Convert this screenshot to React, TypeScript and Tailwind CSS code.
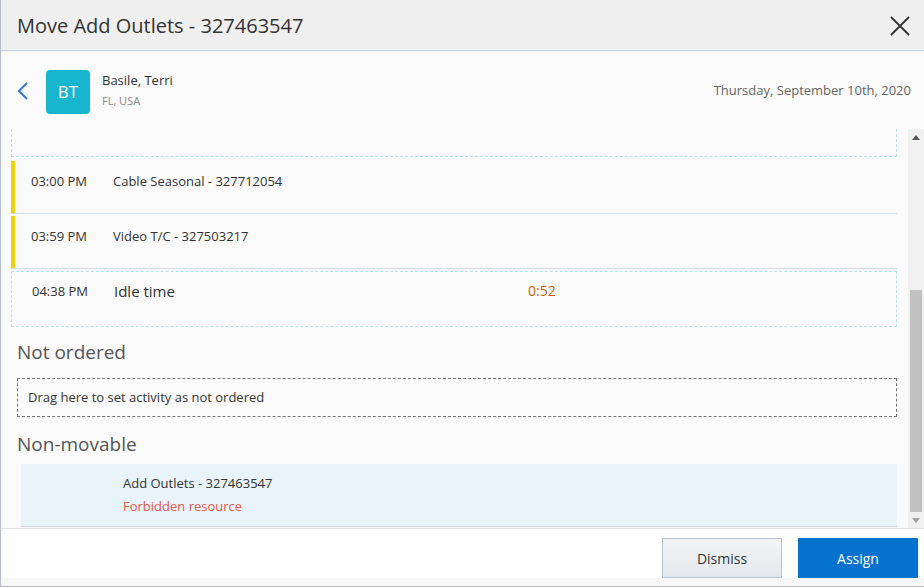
import React from "react";

export default function App() {
  const font = { fontFamily: '"Open Sans", "Noto Sans", sans-serif' };
  return (
    <div
      className="w-[924px] h-[587px] flex flex-col border-l border-b border-[#b4bccc] bg-[#fafafa] overflow-hidden text-[#333]"
      style={font}
    >
      {/* Header */}
      <div className="h-[51px] shrink-0 bg-[#efefef] border-b border-[#c4d0dc] flex items-center justify-between pl-[16px] pr-[14px]">
        <div className="text-[20px] text-[#333] mt-[1px]">Move Add Outlets - 327463547</div>
        <svg width="20" height="20" viewBox="0 0 20 20" className="mt-[1px]">
          <path d="M1 1 L19 19 M19 1 L1 19" stroke="#333" strokeWidth="1.8" fill="none" />
        </svg>
      </div>

      {/* Sub header */}
      <div className="h-[78px] shrink-0 flex items-center pl-[16px] pr-[13px] pt-[3px]">
        <svg width="12" height="18" viewBox="0 0 12 18" className="-mt-[1px]">
          <path d="M10 1 L2 9 L10 17" stroke="#3a78d0" strokeWidth="2" fill="none" />
        </svg>
        <div className="ml-[17px] w-[44px] h-[44px] rounded-[4px] bg-[#17b6cf] flex items-center justify-center text-white text-[17px]">
          BT
        </div>
        <div className="ml-[12px] flex flex-col -mt-[3px]">
          <div className="text-[13px] text-[#333] leading-[18px]">Basile, Terri</div>
          <div className="text-[11px] text-[#888] leading-[16px] mt-[4px]">FL, USA</div>
        </div>
        <div className="ml-auto text-[13px] text-[#666] -mt-[2px]">Thursday, September 10th, 2020</div>
      </div>

      {/* Body */}
      <div className="h-[399px] shrink-0 flex">
        <div className="flex-1 pl-[10px] pr-[11px] overflow-hidden">
          <div className="h-[28px] border-x border-b border-dashed border-[#b8e2f4]" />

          <div className="mt-[4px] h-[53px] flex items-start border-b border-[#d0dce8]">
            <div className="w-[4px] self-stretch bg-[#f5d000]" />
            <div className="w-[98px] pl-[16px] pt-[11px] text-[13px] leading-[18px]">03:00 PM</div>
            <div className="text-[13px] pt-[11px] leading-[18px]">Cable Seasonal - 327712054</div>
          </div>
          <div className="mt-[2px] h-[53px] flex items-start border-b border-[#d0dce8]">
            <div className="w-[4px] self-stretch bg-[#f5d000]" />
            <div className="w-[98px] pl-[16px] pt-[11px] text-[13px] leading-[18px]">03:59 PM</div>
            <div className="text-[13px] pt-[11px] leading-[18px]">Video T/C - 327503217</div>
          </div>

          <div className="mt-[2px] h-[56px] flex items-start pt-[9px] border border-dashed border-[#b8e2f4]">
            <div className="w-[102px] pl-[20px] text-[13px] leading-[18px] pt-[1px]">04:38 PM</div>
            <div className="w-[414px] text-[15px] leading-[20px]">Idle time</div>
            <div className="text-[14px] text-[#c8620a] leading-[20px]">0:52</div>
          </div>

          <div className="mt-[13px] pl-[6px] text-[19px] text-[#555] leading-[24px]">Not ordered</div>
          <div className="mt-[14px] ml-[6px] h-[39px] flex items-center pl-[10px] border border-dashed border-[#777] text-[13px]">
            Drag here to set activity as not ordered
          </div>

          <div className="mt-[15px] pl-[6px] text-[19px] text-[#555] leading-[24px]">Non-movable</div>
          <div className="mt-[8px] ml-[10px] h-[63px] bg-[#e8f3fa] border-b border-[#c8d4e0] flex flex-col justify-center pl-[102px]">
            <div className="text-[13px] leading-[20px] -mt-[2px]">Add Outlets - 327463547</div>
            <div className="text-[13px] leading-[20px] mt-[3px] text-[#e8574a]">Forbidden resource</div>
          </div>
        </div>

        {/* Scrollbar */}
        <div className="w-[16px] bg-[#f0f0f0] flex flex-col items-center">
          <div className="h-[16px] flex items-center justify-center">
            <svg width="8" height="5" viewBox="0 0 8 5">
              <path d="M0 5 L4 0 L8 5 Z" fill="#555" />
            </svg>
          </div>
          <div className="h-[145px]" />
          <div className="w-[12px] h-[222px] bg-[#c1c1c1]" />
          <div className="flex-1 flex items-center justify-center">
            <svg width="8" height="5" viewBox="0 0 8 5">
              <path d="M0 0 L8 0 L4 5 Z" fill="#a0a0a0" />
            </svg>
          </div>
        </div>
      </div>

      {/* Footer */}
      <div className="h-[50px] shrink-0 bg-white border-t border-[#e2e2e2] flex items-center justify-end pr-[6px] gap-[16px]">
        <button className="w-[120px] h-[40px] mt-[9px] border border-[#b8c4d0] bg-gradient-to-b from-[#f2f4f6] to-[#e4e8ec] text-[14px] text-[#333]">
          Dismiss
        </button>
        <button className="w-[120px] h-[40px] mt-[9px] bg-[#0572ce] text-white text-[14px] rounded-[1px]">
          Assign
        </button>
      </div>
      <div className="flex-1 bg-[#f7f7f7]" />
    </div>
  );
}
